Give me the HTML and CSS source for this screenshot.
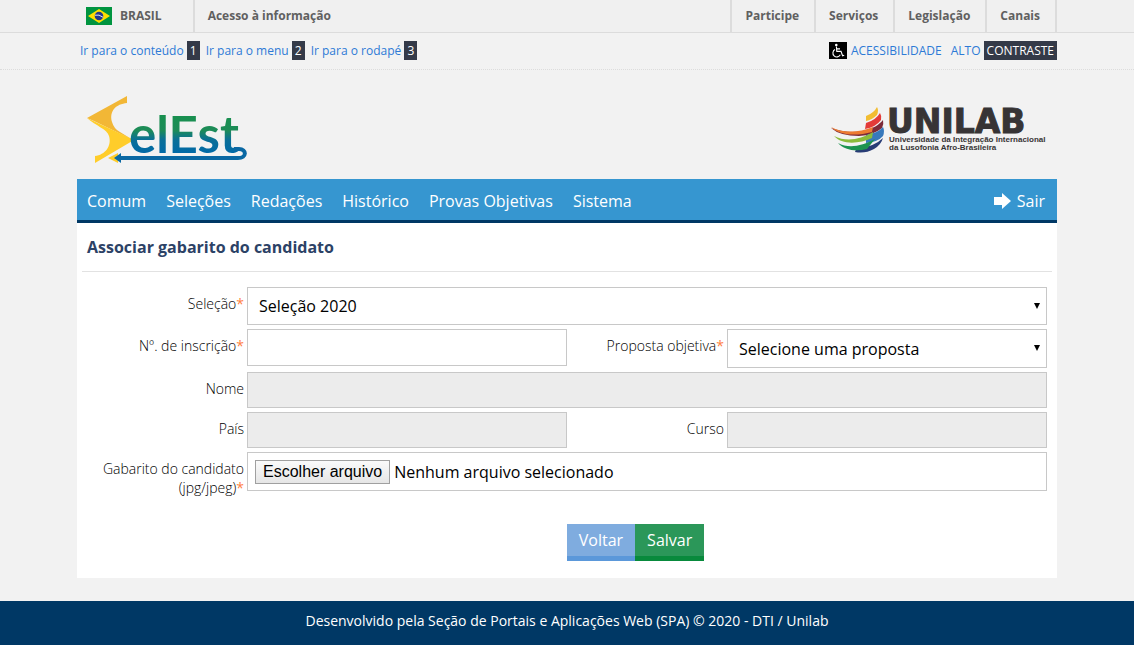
FILE: index.html
```html
<!DOCTYPE html>
<html lang="pt-BR">
<head>
    <meta charset="UTF-8">
    <meta name="viewport" content="width=device-width, initial-scale=1.0">
    <title>SelEst - Associar gabarito do candidato</title>
    <link rel="stylesheet" href="styles.css">
</head>
<body>

    <!-- Barra Brasil -->
    <div class="barra-brasil">
        <div class="container barra-conteudo">
            <a class="brasil" href="#">
                <svg width="26" height="18" viewBox="0 0 26 18" aria-hidden="true">
                    <rect width="26" height="18" fill="#009440"/>
                    <path d="M13 2 L24 9 L13 16 L2 9 Z" fill="#ffdf00"/>
                    <circle cx="13" cy="9" r="4.3" fill="#25388c"/>
                    <path d="M8.9 8.2 Q13 7 17.1 10.3" fill="none" stroke="#dfe6f2" stroke-width="1"/>
                </svg>
                BRASIL
            </a>
            <a class="acesso" href="#">Acesso à informação</a>
            <ul class="barra-links">
                <li><a href="#">Participe</a></li>
                <li><a href="#">Serviços</a></li>
                <li><a href="#">Legislação</a></li>
                <li><a href="#">Canais</a></li>
            </ul>
        </div>
    </div>

    <!-- Acessibilidade -->
    <div class="acessibilidade">
        <div class="container acessibilidade-conteudo">
            <div class="atalhos">
                <a href="#conteudo">Ir para o conteúdo <span class="tecla">1</span></a>
                <a href="#menu">Ir para o menu <span class="tecla">2</span></a>
                <a href="#rodape">Ir para o rodapé <span class="tecla">3</span></a>
            </div>
            <div class="opcoes">
                <a class="acessivel" href="#">
                    <svg width="18" height="17" viewBox="0 0 18 17" aria-hidden="true">
                        <rect width="18" height="17" fill="#000"/>
                        <circle cx="7.3" cy="3" r="1.3" fill="#fff"/>
                        <path d="M7.4 4.5 L7.8 9.4 H12 L13.6 13.8 L15.2 13.2 M7.6 6.9 H11 M6 7.6 A3.9 3.9 0 1 0 11.3 12.8" fill="none" stroke="#fff" stroke-width="1.1"/>
                    </svg>
                    ACESSIBILIDADE
                </a>
                <a href="#">ALTO <span class="tecla">CONTRASTE</span></a>
            </div>
        </div>
    </div>

    <header class="container topo">
        <a href="#" aria-label="SelEst">
            <svg class="logo" width="162" height="70" viewBox="0 0 162 70">
                <defs>
                    <linearGradient id="verdeAzul" gradientUnits="userSpaceOnUse" x1="0" y1="12" x2="0" y2="59">
                        <stop offset="0" stop-color="#16934a"/>
                        <stop offset="0.5" stop-color="#1d8b58"/>
                        <stop offset="0.7" stop-color="#0a6f98"/>
                        <stop offset="1" stop-color="#0069a8"/>
                    </linearGradient>
                </defs>
                <path d="M0 23 L40 1 V8 C29 9 22 16 25 27 Q27 34 33 37 L46 45 L7 26 Z" fill="#f2b736"/>
                <path d="M0 23 L47 45 L8 68 V61 C18 60 25 51 22 41 C20 34 9 31 0 23 Z" fill="#ffcd2a"/>
                <text class="logo-letras" x="42" y="58" fill="url(#verdeAzul)">elEst</text>
                <path d="M31 58 V68 L21 63 Z" fill="#ffcd2a"/>
                <path d="M30 63 H151 C160 63 160 54 152 54 H147" fill="none" stroke="#0a68a3" stroke-width="4"/>
                <path d="M34 58 L27 63 L34 68 Z" fill="#0a68a3"/>
            </svg>
        </a>
        <a href="#" aria-label="UNILAB">
            <svg class="logo" width="217" height="48" viewBox="0 0 217 48">
                <path d="M36 10 Q44 7 47 1 Q49 4 47 9 Q42 14 36 15 Z" fill="#f2bd32"/>
                <path d="M36 17 Q46 14 50 7 Q52 10 51 14 Q46 21 35 23 Z" fill="#e33b38"/>
                <path d="M1 22 Q24 30 42 22 Q49 19 53 14 Q54 18 52 22 Q44 29 29 30 Q10 30 1 22 Z" fill="#7d2a38"/>
                <path d="M1 21 C12 27 28 27 43 21 L42 26 C27 30 10 30 1 21 Z" fill="#ed7b31"/>
                <path d="M36 29 Q48 27 53 21 Q55 25 53 30 Q48 36 36 37 Z" fill="#3779bc"/>
                <path d="M4 30 C16 36 30 34 43 26 L42 32 C29 38 12 39 4 30 Z" fill="#8bbb3b"/>
                <path d="M26 43 Q44 41 53 32 Q51 39 44 43 Q35 48 25 46 Z" fill="#283c75"/>
                <path d="M8 37 C19 43 32 40 45 33 L37 43 C26 46 14 44 8 37 Z" fill="#1c9350"/>
                <text class="unilab-nome" x="57" y="27">UNILAB</text>
                <text class="unilab-texto" x="59" y="36">Universidade da Integração Internacional</text>
                <text class="unilab-texto" x="59" y="44">da Lusofonia Afro-Brasileira</text>
            </svg>
        </a>
    </header>

    <nav class="container menu" id="menu">
        <a href="#">Comum</a>
        <a href="#">Seleções</a>
        <a href="#">Redações</a>
        <a href="#">Histórico</a>
        <a href="#">Provas Objetivas</a>
        <a href="#">Sistema</a>
        <a class="sair" href="#">
            <svg width="17" height="16" viewBox="0 0 17 16" aria-hidden="true">
                <path d="M0 4 H8 V0 L17 8 L8 16 V12 H0 Z" fill="#fff"/>
            </svg>
            Sair
        </a>
    </nav>

    <main class="container conteudo" id="conteudo">
        <h1>Associar gabarito do candidato</h1>
        <form>
            <div class="campos">
                <label for="selecao">Seleção<span class="obrigatorio">*</span></label>
                <div class="caixa-select largo">
                    <select id="selecao">
                        <option>Seleção 2020</option>
                    </select>
                    <svg class="seta" width="6" height="6" viewBox="0 0 6 6" aria-hidden="true"><path d="M0 0 H6 L3 6 Z"/></svg>
                </div>

                <label for="inscricao">Nº. de inscrição<span class="obrigatorio">*</span></label>
                <input type="text" id="inscricao">
                <label for="proposta">Proposta objetiva<span class="obrigatorio">*</span></label>
                <div class="caixa-select">
                    <select id="proposta">
                        <option>Selecione uma proposta</option>
                    </select>
                    <svg class="seta" width="6" height="6" viewBox="0 0 6 6" aria-hidden="true"><path d="M0 0 H6 L3 6 Z"/></svg>
                </div>

                <label for="nome">Nome</label>
                <input type="text" id="nome" class="largo" disabled>

                <label for="pais">País</label>
                <input type="text" id="pais" disabled>
                <label for="curso">Curso</label>
                <input type="text" id="curso" disabled>

                <label for="gabarito">Gabarito do candidato (jpg/jpeg)<span class="obrigatorio">*</span></label>
                <div class="arquivo largo">
                    <span class="arquivo-botao">Escolher arquivo</span>
                    <span>Nenhum arquivo selecionado</span>
                    <input type="file" id="gabarito" accept=".jpg,.jpeg">
                </div>
            </div>
            <div class="botoes">
                <button type="button" class="botao voltar">Voltar</button>
                <button type="submit" class="botao salvar">Salvar</button>
            </div>
        </form>
    </main>

    <footer class="rodape" id="rodape">
        Desenvolvido pela Seção de Portais e Aplicações Web (SPA) © 2020 - DTI / Unilab
    </footer>

</body>
</html>
```
FILE: styles.css
```css
* {
    box-sizing: border-box;
}

body {
    margin: 0;
    font-family: 'Open Sans', sans-serif;
    font-size: 14px;
    color: #000;
    background-color: #f2f2f2;
}

a {
    text-decoration: none;
}

.container {
    max-width: 980px;
    margin: 0 auto;
}

/* Barra Brasil */
.barra-brasil {
    background-color: #f0f0f0;
    border-bottom: 1px solid #dcdcdc;
}

.barra-conteudo {
    display: flex;
    line-height: 32px;
    font-size: 12px;
    font-weight: bold;
}

.barra-conteudo a {
    color: #606060;
}

.brasil {
    display: flex;
    align-items: center;
    gap: 8px;
    padding: 0 31px 0 9px;
    border-right: 2px solid #dcdcdc;
}

.acesso {
    padding-left: 13px;
}

.barra-links {
    display: flex;
    margin: 0 0 0 auto;
    padding: 0;
    list-style: none;
    border-left: 2px solid #dcdcdc;
}

.barra-links li {
    padding: 0 15px 0 13px;
    border-right: 2px solid #dcdcdc;
}

/* Acessibilidade */
.acessibilidade {
    border-bottom: 1px dotted #dcdcdc;
}

.acessibilidade-conteudo {
    display: flex;
    justify-content: space-between;
    padding: 8px 0 9px 3px;
    line-height: 19px;
    font-size: 12px;
}

.acessibilidade a {
    color: #2d7ad6;
}

.atalhos,
.opcoes {
    display: flex;
    gap: 6px;
}

.opcoes {
    gap: 9px;
}

.acessivel {
    display: flex;
    align-items: center;
    gap: 4px;
}

.acessibilidade .tecla {
    display: inline-block;
    padding: 0 3px;
    color: #fff;
    background-color: #343a48;
}

/* Topo */
.topo {
    display: flex;
    justify-content: space-between;
    align-items: center;
    padding: 25px 10px 14px;
}

.logo {
    display: block;
    overflow: visible;
}

.logo-letras {
    font-family: Lato, sans-serif;
    font-size: 51px;
    font-weight: bold;
}

.unilab-nome {
    font-family: 'DejaVu Sans', sans-serif;
    font-size: 33px;
    font-weight: bold;
    fill: #373435;
    stroke: #373435;
    stroke-width: 1px;
}

.unilab-texto {
    font-family: 'Liberation Sans', sans-serif;
    font-size: 8px;
    font-weight: bold;
    fill: #373435;
}

/* Menu */
.menu {
    display: flex;
    align-items: center;
    gap: 20px;
    height: 44px;
    padding: 2px 12px 0 10px;
    font-size: 16px;
    background-color: #3696d0;
    border-bottom: 3px solid #003865;
}

.menu a {
    color: #fff;
}

.menu .sair {
    display: flex;
    align-items: center;
    gap: 6px;
    margin-left: auto;
}

/* Formulário */
.conteudo {
    padding: 0 5px 17px;
    background-color: #fff;
}

h1 {
    margin: 0 0 15px;
    padding: 0 5px;
    line-height: 48px;
    font-size: 16px;
    color: #2c4266;
    border-bottom: 1px solid #e2e2e2;
}

.campos {
    display: grid;
    grid-template-columns: 1fr 2fr 1fr 2fr;
    grid-template-rows: 38px 39px 36px 36px auto;
    row-gap: 4px;
    padding: 0 5px;
}

.campos label {
    padding: 7px 3px 0 8px;
    line-height: 19px;
    text-align: right;
    font-weight: 300;
}

.obrigatorio {
    color: #ff7f3f;
    font-weight: 400;
}

.largo {
    grid-column: span 3;
}

.campos input,
.campos select,
.arquivo {
    width: 100%;
    padding: 0 11px;
    font-family: inherit;
    font-size: 16px;
    color: #000;
    background-color: #fff;
    border: 1px solid #c8c8c8;
    border-radius: 0;
}

.campos input:disabled {
    background-color: #ececec;
}

#inscricao {
    height: 37px;
}

.caixa-select {
    position: relative;
}

.campos select {
    height: 100%;
    appearance: none;
}

.seta {
    position: absolute;
    top: 16px;
    right: 7px;
    pointer-events: none;
}

.arquivo {
    position: relative;
    display: flex;
    align-items: center;
    gap: 4px;
    height: 39px;
    padding: 0 7px;
}

.arquivo-botao {
    padding: 0 7px;
    line-height: 22px;
    font-family: 'Liberation Sans', sans-serif;
    background: linear-gradient(#fafafa, #e6e6e6);
    border: 1px solid #a0a0a0;
}

/* O campo real cobre a caixa inteira */
.arquivo input {
    position: absolute;
    inset: 0;
    height: 100%;
    opacity: 0;
}

.botoes {
    display: flex;
    justify-content: center;
    margin-top: 27px;
    padding-left: 137px;
}

.botao {
    padding: 0 12px;
    line-height: 32px;
    font-family: inherit;
    font-size: 16px;
    color: #fff;
    border: 0;
    border-bottom: 5px solid;
}

.voltar {
    background-color: #7facdf;
    border-color: #5b98da;
}

.salvar {
    background-color: #2b9759;
    border-color: #088a3c;
}

.rodape {
    margin-top: 23px;
    padding: 10px 0 15px;
    line-height: 19px;
    text-align: center;
    color: #fff;
    background-color: #003865;
}
```
